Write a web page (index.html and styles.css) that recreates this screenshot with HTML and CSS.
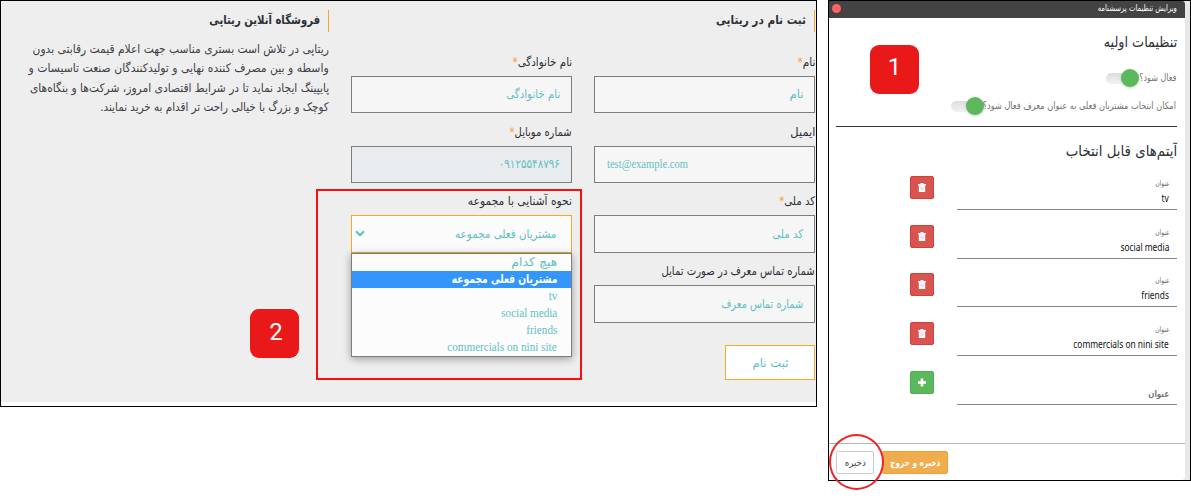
FILE: index.html
```
<!DOCTYPE html>
<html lang="fa" dir="rtl">
<head>
<meta charset="utf-8">
<title>ثبت نام در ریتاپی</title>
<link rel="stylesheet" href="styles.css">
</head>
<body>
<div class="stage">
  <section class="settings">
    <div class="modal">
      <header class="modal-head"><span class="t x76">ویرایش تنظیمات پرسشنامه</span><i class="close-dot"></i></header>
      <div class="modal-body">
        <h2 class="title"><span class="t x85">تنظیمات اولیه</span></h2>
        <div class="switch-row first"><span class="switch-label w37"><span class="t x80">فعال شود؟</span></span><span class="switch"><i></i></span></div>
        <div class="switch-row"><span class="switch-label w192"><span class="t x82">امکان انتخاب مشتریان فعلی به عنوان معرف فعال شود؟</span></span><span class="switch"><i></i></span></div>
        <hr>
        <h2 class="title second"><span class="t x89">آیتم‌های قابل انتخاب</span></h2>
        <div class="item"><div class="field"><small><span class="t x72">عنوان</span></small><b dir="ltr"><span class="t x84">tv</span></b></div><button class="sq red"><svg viewBox="0 0 8 9"><path d="M0 1h2.5V0h3v1H8v1.3H0zM.8 2h6.4v7H.8z" fill="#fff"/><path d="M3.2 3.6v3.8M4.9 3.6v3.8" stroke="#f2b6c4" stroke-width=".8"/></svg></button></div>
        <div class="item"><div class="field"><small><span class="t x72">عنوان</span></small><b dir="ltr"><span class="t x84">social media</span></b></div><button class="sq red"><svg viewBox="0 0 8 9"><path d="M0 1h2.5V0h3v1H8v1.3H0zM.8 2h6.4v7H.8z" fill="#fff"/><path d="M3.2 3.6v3.8M4.9 3.6v3.8" stroke="#f2b6c4" stroke-width=".8"/></svg></button></div>
        <div class="item"><div class="field"><small><span class="t x72">عنوان</span></small><b dir="ltr"><span class="t x84">friends</span></b></div><button class="sq red"><svg viewBox="0 0 8 9"><path d="M0 1h2.5V0h3v1H8v1.3H0zM.8 2h6.4v7H.8z" fill="#fff"/><path d="M3.2 3.6v3.8M4.9 3.6v3.8" stroke="#f2b6c4" stroke-width=".8"/></svg></button></div>
        <div class="item"><div class="field"><small><span class="t x72">عنوان</span></small><b dir="ltr"><span class="t x84">commercials on nini site</span></b></div><button class="sq red"><svg viewBox="0 0 8 9"><path d="M0 1h2.5V0h3v1H8v1.3H0zM.8 2h6.4v7H.8z" fill="#fff"/><path d="M3.2 3.6v3.8M4.9 3.6v3.8" stroke="#f2b6c4" stroke-width=".8"/></svg></button></div>
        <div class="item"><div class="field empty"><strong><span class="t x80">عنوان</span></strong></div><button class="sq green"><svg viewBox="0 0 8 8"><path d="M4 0v8M0 4h8" stroke="#fff" stroke-width="2.6"/></svg></button></div>
      </div>
      <footer class="modal-foot"><button class="save-exit"><span class="t mid x72">ذخیره و خروج</span></button><button class="save"><span class="t mid x86">ذخیره</span></button></footer>
    </div>
    <i class="ring"></i>
    <span class="badge one">1</span>
  </section>

  <section class="shop">
    <div class="shop-inner">
      <div class="form">
        <h1><span class="t x87">ثبت نام در ریتاپی</span></h1>
        <div class="grid">
          <div class="cell"><label><span class="t x88">نام<em>*</em></span></label><div class="input"><span class="t x97">نام</span></div></div>
          <div class="cell"><label><span class="t x86">نام خانوادگی<em>*</em></span></label><div class="input"><span class="t x85">نام خانوادگی</span></div></div>
          <div class="cell"><label><span class="t x95">ایمیل</span></label><div class="input email" dir="ltr"><span class="t left x88">test@example.com</span></div></div>
          <div class="cell"><label><span class="t x83">شماره موبایل<em>*</em></span></label><div class="input disabled"><span class="t x86">۰۹۱۲۵۵۴۸۷۹۶</span></div></div>
          <div class="cell tall"><label><span class="t x85">کد ملی<em>*</em></span></label><div class="input"><span class="t x85">کد ملی</span></div></div>
          <div class="cell tall"><label><span class="t x89">نحوه آشنایی با مجموعه</span></label>
            <div class="input select"><span class="t x86">مشتریان فعلی مجموعه</span><svg class="chev" viewBox="0 0 10 7"><path d="M1 1.2l4 4 4-4" fill="none" stroke="#5fc0c5" stroke-width="2.2"/></svg>
              <ul class="menu">
                <li><span class="t x104">هیچ کدام</span></li>
                <li class="on"><span class="t x76">مشتریان فعلی مجموعه</span></li>
                <li dir="ltr"><span class="t x93">tv</span></li>
                <li dir="ltr"><span class="t x93">social media</span></li>
                <li dir="ltr"><span class="t x93">friends</span></li>
                <li dir="ltr"><span class="t x93">commercials on nini site</span></li>
              </ul>
            </div></div>
          <div class="cell tall"><label><span class="t x84">شماره تماس معرف در صورت تمایل</span></label><div class="input"><span class="t x82">شماره تماس معرف</span></div></div>
        </div>
        <button class="submit"><span class="t mid x97">ثبت نام</span></button>
      </div>
      <aside class="about">
        <h1><span class="t x84">فروشگاه آنلاین ریتاپی</span></h1>
        <p><span class="t x89">ریتاپی در تلاش است بستری مناسب جهت اعلام قیمت رقابتی بدون</span></p>
        <p><span class="t x90">واسطه و بین مصرف کننده نهایی و تولیدکنندگان صنعت تاسیسات و</span></p>
        <p><span class="t x89">پایپینگ ایجاد نماید تا در شرایط اقتصادی امروز، شرکت‌ها و بنگاه‌های</span></p>
        <p><span class="t x86">کوچک و بزرگ با خیالی راحت تر اقدام به خرید نمایند.</span></p>
      </aside>
    </div>
    <i class="highlight"></i>
    <span class="badge two">2</span>
  </section>
</div>
</body>
</html>
```
FILE: styles.css
```
*{box-sizing:border-box}
body{margin:0;background:#fff;font-family:"DejaVu Sans",sans-serif;font-size:12px;color:#2d3036}
h1,h2,p,ul,hr{margin:0;padding:0}
button{padding:0;margin:0;font-family:inherit;display:flex;align-items:center;justify-content:center}
.stage{display:flex;justify-content:space-between;width:1191px;height:500px;overflow:hidden}

/* horizontally condensed text */
.t{display:inline-block;white-space:nowrap;flex:none;transform-origin:right center}
.t.left{transform-origin:left center}
.t.mid{transform-origin:center}
.x72{transform:scaleX(.73)}.x76{transform:scaleX(.763)}.x80{transform:scaleX(.8)}
.x82{transform:scaleX(.819)}.x83{transform:scaleX(.831)}.x84{transform:scaleX(.839)}
.x85{transform:scaleX(.853)}.x86{transform:scaleX(.863)}.x87{transform:scaleX(.874)}
.x88{transform:scaleX(.88)}.x89{transform:scaleX(.89)}.x90{transform:scaleX(.902)}
.x93{transform:scaleX(.93)}.x95{transform:scaleX(.95)}.x97{transform:scaleX(.97)}
.x104{transform:scaleX(1.04)}

/* shop registration */
.shop{position:relative;width:817px;height:407px;border:1px solid #000;background:#fff}
.shop-inner{display:flex;height:401px;background:#eee;padding:9px 1px 0 0}
.form{width:464px}
.about{width:300px;margin-right:22px}
h1{font-size:12px;line-height:20px;height:22px;border-right:1px solid #f5a81c;padding-right:8px;font-weight:bold}
.about p{height:19.3px;line-height:19.3px;color:#3d4047}
.about h1{margin-bottom:8px}
.grid{display:grid;grid-template-columns:221px 221px;column-gap:22px;margin-top:21px}
.cell{height:70px}
.cell:nth-child(3),.cell:nth-child(4){height:69px}
label{display:block;height:23px;line-height:19px}
label em{font-style:normal;color:#f5a040}
.input{height:37px;border:1px solid #7d7d7d;background:#f6f6f6;color:#5fc0c5;display:flex;align-items:center;padding:0 11px 1px}
.tall .input{height:38px}
.disabled{background:#e8ecef}
.email{font-family:"Liberation Serif",serif;padding:0 12px 1px}
.cell .select{position:relative;border-color:#f0a92e;background:#fbfbfb;padding:0 15px 1px 3px;justify-content:space-between}
.chev{width:10px;height:7px;flex:none}
.menu{position:absolute;z-index:2;top:37px;right:-1px;width:221px;height:104px;border:1px solid #7d7d7d;background:#fcfcfc;list-style:none;box-shadow:0 2px 8px rgba(0,0,0,.35)}
.menu li{height:17px;line-height:17px;padding-right:14px;text-align:right}
.menu .on{background:#3396fb;color:#fff;font-weight:bold}
.menu li[dir=ltr]{font-family:"Liberation Serif",serif;line-height:16px}
.submit{width:90px;height:35px;border:1px solid #f0a92e;background:#fff;color:#5fc0c5;font-size:12px;margin-top:13px}
.highlight{position:absolute;left:315px;top:188px;width:266px;height:191px;border:2px solid #f90f12}
.badge{position:absolute;width:49px;height:49px;border-radius:9px;background:#e91919;color:#fff;font:24px/45px Roboto,sans-serif;text-align:center}
.two{left:249px;top:308px;padding-left:3px;line-height:46px}
.one{left:41px;top:44px}

/* settings modal */
.settings{position:relative;width:363px;height:481px;border:1px solid #000;background:#e8e8eb;padding-right:5px}
.modal{height:479px;background:#fff;border-radius:0 3px 4px 0;overflow:hidden;display:flex;flex-direction:column}
.modal-head{height:17px;background:#434343;color:#fff;font-size:9px;line-height:14px;display:flex;justify-content:space-between;padding:0 8px 0 3px}
.close-dot{width:9px;height:9px;border-radius:50%;background:#ff6262;margin-top:3px}
.modal-body{height:425px;padding:14px 8px 0 7px}
.title{font-size:15px;line-height:20px;height:20px;font-weight:normal}
.second .t{padding-bottom:1px}
.switch-row{display:flex;align-items:center;height:28px;font-size:10px;color:#737373;padding-right:1px}
.first{margin-top:12px}
.switch-label{display:flex;flex:none;padding-bottom:2px}
.w37{width:37px}.w192{width:192px}
.switch{width:33px;height:11px;display:flex;align-items:center;background:linear-gradient(#dcdcdc,#f3f3f3);border-radius:6px}
.switch i{width:18px;height:18px;flex:none;border-radius:50%;background:#5cb85c;box-shadow:0 1px 3px rgba(0,0,0,.2)}
hr{border:0;height:1px;background:#333;margin-top:6px}
.second{margin:14px 0 15px}
.item{display:flex;height:48.7px}
.field{width:220px;height:34px;border-bottom:1px solid #858585;padding-right:8px;display:flex;flex-direction:column}
.field small{font-size:8px;line-height:15px;height:15px;color:#666}
.field b{font:10px/15px "Noto Sans",sans-serif;color:#111;text-align:right}
.field strong{font-size:9px;line-height:14px;margin-top:16px;color:#777}
.sq{width:24px;height:23px;border-radius:2px;margin-right:23px}
.sq svg{width:8px;height:9px}
.red{background:#d9534f;border:1px solid #d43f3a}
.green{background:#5cb85c;border:1px solid #4cae4c}
.modal-foot{height:37px;border-top:1px solid #b3b3b0;display:flex;justify-content:flex-end;gap:8px;padding:7px 0 0 7px}
.modal-foot button{height:23px;border-radius:2px;font-size:10px}
.modal-foot .save-exit{width:66px;background:#f0ad4e;border:1px solid #eea236;color:#fff;font-weight:bold}
.modal-foot .save{width:38px;background:#fff;border:1px solid #ccc;color:#444}
.ring{position:absolute;left:0;top:433px;width:55px;height:56px;border:2px solid #ee2424;border-radius:50%}
```
